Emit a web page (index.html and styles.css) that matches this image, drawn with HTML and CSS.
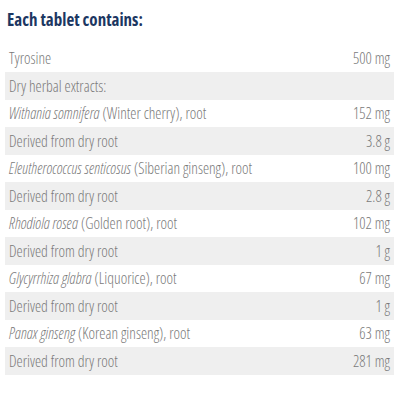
FILE: index.html
```html
<!DOCTYPE html>
<html lang="en">

<head>
    <meta charset="UTF-8">
    <meta name="viewport" content="width=device-width, initial-scale=1.0">
    <title>Each tablet contains</title>
    <link rel="stylesheet" href="styles.css">
</head>

<body>

    <div class="container">
        <h2>Each tablet contains:</h2>

        <!-- Ingredients -->
        <table class="ingredients">
            <tbody>
                <tr class="first">
                    <td>Tyrosine</td>
                    <td class="amount">500 mg</td>
                </tr>
                <tr class="shade">
                    <td>Dry herbal extracts:</td>
                    <td class="amount"></td>
                </tr>
                <tr>
                    <td><i>Withania somnifera</i> (Winter cherry), root</td>
                    <td class="amount">152 mg</td>
                </tr>
                <tr class="shade">
                    <td>Derived from dry root</td>
                    <td class="amount">3.8 g</td>
                </tr>
                <tr>
                    <td><i>Eleutherococcus senticosus</i> (Siberian ginseng), root</td>
                    <td class="amount">100 mg</td>
                </tr>
                <tr class="shade">
                    <td>Derived from dry root</td>
                    <td class="amount">2.8 g</td>
                </tr>
                <tr>
                    <td><i>Rhodiola rosea</i> (Golden root), root</td>
                    <td class="amount">102 mg</td>
                </tr>
                <tr class="shade">
                    <td>Derived from dry root</td>
                    <td class="amount">1 g</td>
                </tr>
                <tr>
                    <td><i>Glycyrrhiza glabra</i> (Liquorice), root</td>
                    <td class="amount">67 mg</td>
                </tr>
                <tr class="shade">
                    <td>Derived from dry root</td>
                    <td class="amount">1 g</td>
                </tr>
                <tr>
                    <td><i>Panax ginseng</i> (Korean ginseng), root</td>
                    <td class="amount">63 mg</td>
                </tr>
                <tr class="shade">
                    <td>Derived from dry root</td>
                    <td class="amount">281 mg</td>
                </tr>
            </tbody>
        </table>
    </div>

</body>

</html>
```

FILE: styles.css
```css
body {
    margin: 0;
    background-color: #fff;
}

body,
table {
    font-family: 'Open Sans', sans-serif;
    font-stretch: 75%;
}

.container {
    padding: 8px 6px 0 5px;
}

h2 {
    margin: 0 0 12px 2px;
    font-size: 17px;
    font-weight: 700;
    line-height: 24px;
    color: #1c3762;
}

.ingredients {
    width: 100%;
    border-collapse: collapse;
    font-size: 15.5px;
    font-weight: 300;
    color: #7a7a7a;
}

.ingredients td {
    height: 27.5px;
    padding: 0 4px;
    line-height: 18px;
    white-space: nowrap;
}

.ingredients tr.first td {
    height: 28px;
}

.ingredients .shade td {
    background-color: #efefef;
}

.ingredients td.amount {
    text-align: right;
}
```
